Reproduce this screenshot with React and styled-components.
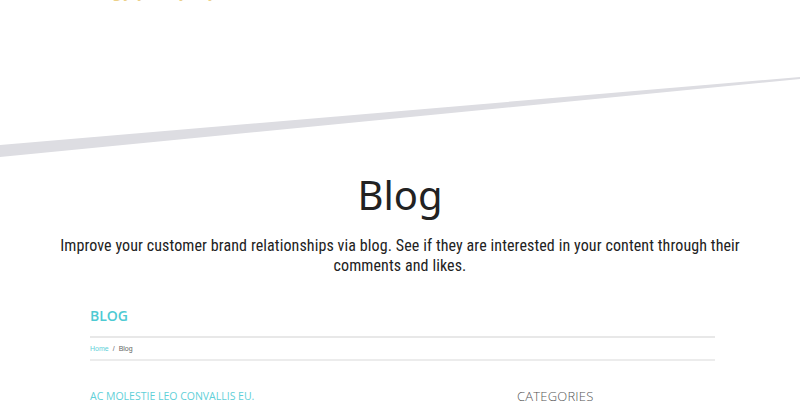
import React from 'react'
import styled, { createGlobalStyle } from 'styled-components'

const Global = createGlobalStyle`
  html, body {
    margin:0;
    padding:0;
    background:#fff;
  }
  body {
    font-family:"Open Sans", "Liberation Sans", sans-serif;
    color:#222;
    overflow:hidden;
  }
`

const Page = styled.div`
  width:800px;
  height:415px;
  overflow:hidden;
  display:flex;
  flex-direction:column;
`
const Hero = styled.header`
  height:165px;
  display:flex;
  flex-direction:column;
  overflow:hidden;
`
const Tagline = styled.div`
  margin-top:-19px;
  padding-left:84px;
  font-family:"Open Sans", sans-serif;
  font-size:15px;
  line-height:20px;
  color:#ecd088;
`
const Slope = styled.svg`
  display:block;
  margin-top:auto;
  width:800px;
  height:110px;
`
const Intro = styled.section`
  display:flex;
  flex-direction:column;
  align-items:center;
  text-align:center;
`
const Title = styled.h1`
  margin:6px 0 0;
  font-family:"Noto Sans", sans-serif;
  font-weight:400;
  font-size:40px;
  line-height:48px;
  color:#222;
`
const Lead = styled.p`
  margin:17px 0 0;
  width:700px;
  font-family:"Liberation Sans Narrow", "Roboto Condensed", "Liberation Sans", sans-serif;
  font-size:16px;
  letter-spacing:0.1px;
  line-height:20px;
  color:#222;
`
const Content = styled.main`
  width:625px;
  margin:30px 0 0 90px;
`
const SectionHead = styled.h2`
  margin:0;
  padding-bottom:10px;
  border-bottom:2px solid #e8e8e8;
  font-family:"Open Sans", sans-serif;
  font-weight:600;
  font-size:14px;
  line-height:20px;
  color:#4ecad3;
`
const Crumbs = styled.nav`
  display:flex;
  gap:4px;
  padding:5px 0 4px;
  border-bottom:2px solid #ececec;
  font-family:"Liberation Sans", Arial, sans-serif;
  font-size:7px;
  line-height:12px;
`
const Crumb = styled.span`
  color:${({ $active }) => ($active ? '#5fd0d8' : '#666')};
`
const Columns = styled.div`
  display:grid;
  grid-template-columns:427px 1fr;
  margin-top:27px;
`
const PostTitle = styled.h3`
  margin:0;
  font-family:"Open Sans", sans-serif;
  font-weight:400;
  font-size:10.5px;
  line-height:16px;
  color:#5fd0d8;
`
const SideTitle = styled.h3`
  margin:0;
  font-family:"Open Sans", sans-serif;
  font-weight:300;
  font-size:13px;
  line-height:16px;
  color:#555;
  letter-spacing:0.2px;
`

export default function App() {
  return (
    <Page>
      <Global />
      <Hero>
        <Tagline>Bring joy every day</Tagline>
        <Slope viewBox="0 55 800 110">
          <polygon points="0,145 800,77 800,79 0,157" fill="#dddde2" />
        </Slope>
      </Hero>
      <Intro>
        <Title>Blog</Title>
        <Lead>
          Improve your customer brand relationships via blog. See if they are interested in your content through their comments and likes.
        </Lead>
      </Intro>
      <Content>
        <SectionHead>BLOG</SectionHead>
        <Crumbs>
          <Crumb $active>Home</Crumb>
          <Crumb>/</Crumb>
          <Crumb>Blog</Crumb>
        </Crumbs>
        <Columns>
          <PostTitle>AC MOLESTIE LEO CONVALLIS EU.</PostTitle>
          <SideTitle>CATEGORIES</SideTitle>
        </Columns>
      </Content>
    </Page>
  )
}
